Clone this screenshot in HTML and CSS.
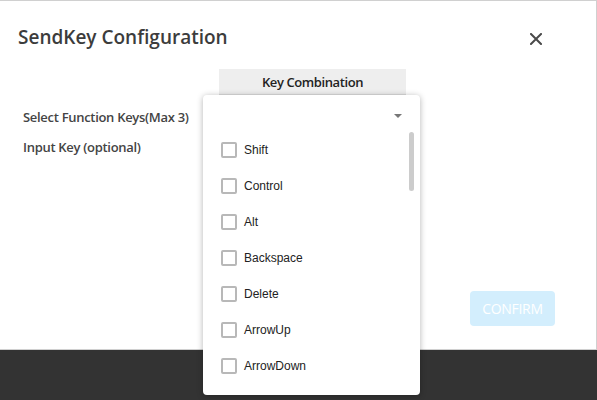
FILE: index.html
```html
<!DOCTYPE html>
<html>
<head>
<meta charset="utf-8">
<link rel="stylesheet" href="styles.css">
</head>
<body>
<div class="dialog">
  <div class="header">
    <h1 class="title">SendKey Configuration</h1>
    <button class="close" aria-label="close">
      <svg width="12" height="12" viewBox="0 0 12 12"><path d="M1 1L11 11M11 1L1 11" stroke="#4a4a4a" stroke-width="2" stroke-linecap="square"/></svg>
    </button>
  </div>
  <div class="body">
    <div class="tab">Key Combination</div>
    <div class="row">Select Function Keys(Max 3)</div>
    <div class="row">Input Key (optional)</div>
  </div>
  <div class="footer">
    <button class="confirm">CONFIRM</button>
  </div>
</div>
<div class="backdrop"></div>
<div class="menu">
  <div class="select"><span class="arrow"></span></div>
  <div class="scrollbar"></div>
  <ul class="list">
    <li class="item"><span class="box"></span>Shift</li>
    <li class="item"><span class="box"></span>Control</li>
    <li class="item"><span class="box"></span>Alt</li>
    <li class="item"><span class="box"></span>Backspace</li>
    <li class="item"><span class="box"></span>Delete</li>
    <li class="item"><span class="box"></span>ArrowUp</li>
    <li class="item"><span class="box"></span>ArrowDown</li>
  </ul>
</div>
</body>
</html>
```

FILE: styles.css
```css
html, body {
  margin: 0;
  padding: 0;
}
body {
  width: 597px;
  height: 400px;
  background: #333333;
  overflow: hidden;
  position: relative;
  font-family: "Open Sans", "Noto Sans", sans-serif;
}
.dialog {
  box-sizing: border-box;
  width: 597px;
  height: 350px;
  background: #ffffff;
  border: 1px solid #d0d0d0;
  border-left: none;
  display: flex;
  flex-direction: column;
}
.header {
  display: flex;
  align-items: center;
  justify-content: space-between;
  padding: 23px 54px 0 18px;
  height: 28px;
}
.title {
  margin: 0;
  margin-top: -3px;
  font-size: 19px;
  font-weight: 600;
  color: #3c3c3c;
  letter-spacing: 0;
  line-height: 28px;
}
.close {
  border: none;
  background: none;
  padding: 0;
  width: 12px;
  height: 12px;
  margin-top: 2px;
  display: flex;
}
.body {
  padding-left: 23px;
  margin-top: 17px;
}
.tab {
  margin-left: 196px;
  width: 187px;
  height: 26px;
  background: #eeeeee;
  border-bottom: 1px solid #dddddd;
  box-sizing: border-box;
  font-size: 13px;
  font-weight: 600;
  color: #222;
  text-align: center;
  line-height: 26px;
  margin-bottom: 7px;
  letter-spacing: -0.4px;
}
.row {
  height: 30px;
  line-height: 30px;
  font-size: 13px;
  font-weight: 600;
  color: #444;
  letter-spacing: -0.3px;
}
.footer {
  margin-top: auto;
  display: flex;
  justify-content: flex-end;
  padding: 0 41px 23px 0;
}
.confirm {
  width: 85px;
  height: 35px;
  border: none;
  border-radius: 4px;
  background: #d3eefd;
  color: #ffffff;
  font-family: "Open Sans", "Noto Sans", sans-serif;
  font-size: 14px;
  letter-spacing: -0.3px;
  padding: 0;
}
.menu {
  position: absolute;
  left: 203px;
  top: 95px;
  width: 217px;
  height: 300px;
  background: #fff;
  border-radius: 4px;
  box-shadow: 0 1px 6px rgba(0, 0, 0, 0.3);
  font-family: "Liberation Sans", Arial, sans-serif;
}
.select {
  height: 37px;
  position: relative;
}
.arrow {
  position: absolute;
  right: 18px;
  top: 19px;
  width: 0;
  height: 0;
  border-left: 4px solid transparent;
  border-right: 4px solid transparent;
  border-top: 4px solid #777;
}
.scrollbar {
  position: absolute;
  left: 206px;
  top: 37px;
  width: 5px;
  height: 59px;
  border-radius: 3px;
  background: #cccccc;
}
.list {
  list-style: none;
  margin: 0;
  padding: 0;
}
.item {
  height: 36px;
  display: flex;
  align-items: center;
  padding-left: 18px;
  font-size: 12px;
  color: #222;
}
.box {
  box-sizing: border-box;
  width: 16px;
  height: 16px;
  border: 2px solid #b8b8b8;
  border-radius: 2px;
  margin-right: 7px;
}
```
